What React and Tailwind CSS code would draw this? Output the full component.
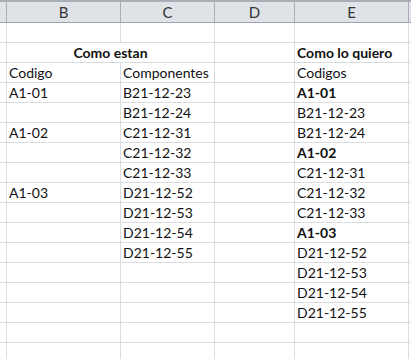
const cols = [
  { key: "A", w: "w-[7px]" },
  { key: "B", w: "w-[114px]" },
  { key: "C", w: "w-[94px]" },
  { key: "D", w: "w-[80px]" },
  { key: "E", w: "w-[114px]" },
  { key: "F", w: "flex-1" },
];

// [B, C, E, boldE]
const rows = [
  ["", "", "", false],
  null, // merged title row
  ["Codigo", "Componentes", "Codigos", false],
  ["A1-01", "B21-12-23", "A1-01", true],
  ["", "B21-12-24", "B21-12-23", false],
  ["A1-02", "C21-12-31", "B21-12-24", false],
  ["", "C21-12-32", "A1-02", true],
  ["", "C21-12-33", "C21-12-31", false],
  ["A1-03", "D21-12-52", "C21-12-32", false],
  ["", "D21-12-53", "C21-12-33", false],
  ["", "D21-12-54", "A1-03", true],
  ["", "D21-12-55", "D21-12-52", false],
  ["", "", "D21-12-53", false],
  ["", "", "D21-12-54", false],
  ["", "", "D21-12-55", false],
  ["", "", "", false],
  ["", "", "", false],
];

function Cell({ w, bold, children, last }) {
  return (
    <div
      className={`${w} h-full shrink-0 flex items-end pl-[2px] pb-[2px] whitespace-nowrap overflow-visible ${
        last ? "" : "border-r border-[#dadcdd]"
      } ${bold ? "font-bold" : ""}`}
    >
      {children}
    </div>
  );
}

export default function App() {
  return (
    <div
      className="w-[411px] h-[359px] overflow-hidden bg-white text-[14px] leading-none text-[#111]"
      style={{ fontFamily: "Lato, 'Open Sans', sans-serif" }}
    >
      {/* Column headers */}
      <div className="flex h-[23px] bg-[#dfe3e8] border-t-2 border-t-[#a9aeb5] border-b border-b-[#9ea4ab] text-[15px]">
        {cols.map((c, i) => (
          <div
            key={c.key}
            className={`${c.w} shrink-0 h-full flex items-center justify-center text-[#333] ${
              i < cols.length - 1 ? "border-r border-[#a9aeb5]" : ""
            }`}
          >
            {c.key === "A" || c.key === "F" ? "" : c.key}
          </div>
        ))}
      </div>

      {rows.map((r, idx) =>
        r === null ? (
          <div key={idx} className="flex h-[20px] border-b border-[#dadcdd]">
            <Cell w="w-[7px]" />
            <div className="w-[208px] shrink-0 h-full flex items-end justify-center pb-[2px] font-bold border-r border-[#dadcdd]">
              Como estan
            </div>
            <Cell w="w-[80px]" />
            <Cell w="w-[114px]" bold>
              Como lo quiero
            </Cell>
            <Cell w="flex-1" last />
          </div>
        ) : (
          <div key={idx} className="flex h-[20px] border-b border-[#dadcdd]">
            <Cell w="w-[7px]" />
            <Cell w="w-[114px]">{r[0]}</Cell>
            <Cell w="w-[94px]">{r[1]}</Cell>
            <Cell w="w-[80px]" />
            <Cell w="w-[114px]" bold={r[3]}>
              {r[2]}
            </Cell>
            <Cell w="flex-1" last />
          </div>
        )
      )}
    </div>
  );
}
